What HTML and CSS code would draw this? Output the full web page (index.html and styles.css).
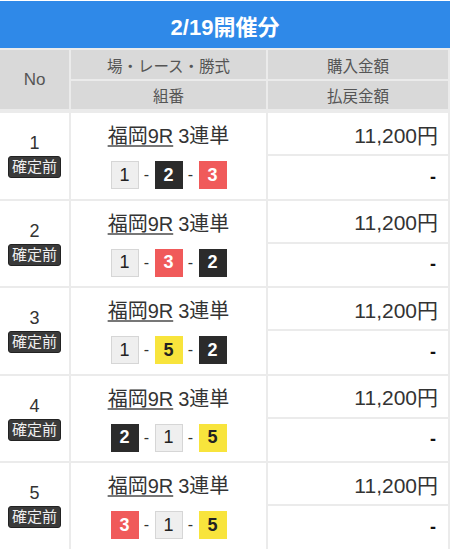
FILE: index.html
```html
<!DOCTYPE html>
<html lang="ja">
<head>
<meta charset="utf-8">
<link rel="stylesheet" href="styles.css">
</head>
<body>
<div class="wrap">
  <div class="title">2/19開催分</div>
  <div class="head">
    <div class="hcell no">No</div>
    <div class="hcell">場・レース・勝式</div>
    <div class="hcell">購入金額</div>
    <div class="hcell">組番</div>
    <div class="hcell">払戻金額</div>
  </div>

  <div class="row">
    <div class="cell num"><span class="n">1</span><span class="badge">確定前</span></div>
    <div class="cell mid">
      <div class="race"><span class="place">福岡9R</span> 3連単</div>
      <div class="combo"><span class="b b1">1</span><span class="dash">-</span><span class="b b2">2</span><span class="dash">-</span><span class="b b3">3</span></div>
    </div>
    <div class="cell amt">11,200円</div>
    <div class="cell pay">-</div>
  </div>

  <div class="row">
    <div class="cell num"><span class="n">2</span><span class="badge">確定前</span></div>
    <div class="cell mid">
      <div class="race"><span class="place">福岡9R</span> 3連単</div>
      <div class="combo"><span class="b b1">1</span><span class="dash">-</span><span class="b b3">3</span><span class="dash">-</span><span class="b b2">2</span></div>
    </div>
    <div class="cell amt">11,200円</div>
    <div class="cell pay">-</div>
  </div>

  <div class="row">
    <div class="cell num"><span class="n">3</span><span class="badge">確定前</span></div>
    <div class="cell mid">
      <div class="race"><span class="place">福岡9R</span> 3連単</div>
      <div class="combo"><span class="b b1">1</span><span class="dash">-</span><span class="b b5">5</span><span class="dash">-</span><span class="b b2">2</span></div>
    </div>
    <div class="cell amt">11,200円</div>
    <div class="cell pay">-</div>
  </div>

  <div class="row">
    <div class="cell num"><span class="n">4</span><span class="badge">確定前</span></div>
    <div class="cell mid">
      <div class="race"><span class="place">福岡9R</span> 3連単</div>
      <div class="combo"><span class="b b2">2</span><span class="dash">-</span><span class="b b1">1</span><span class="dash">-</span><span class="b b5">5</span></div>
    </div>
    <div class="cell amt">11,200円</div>
    <div class="cell pay">-</div>
  </div>

  <div class="row">
    <div class="cell num"><span class="n">5</span><span class="badge">確定前</span></div>
    <div class="cell mid">
      <div class="race"><span class="place">福岡9R</span> 3連単</div>
      <div class="combo"><span class="b b3">3</span><span class="dash">-</span><span class="b b1">1</span><span class="dash">-</span><span class="b b5">5</span></div>
    </div>
    <div class="cell amt">11,200円</div>
    <div class="cell pay">-</div>
  </div>
</div>
</body>
</html>
```

FILE: styles.css
```css
html, body {
  margin: 0;
  padding: 0;
  background: #ffffff;
}
body {
  font-family: "Liberation Sans", "Noto Sans CJK JP", sans-serif;
  color: #333333;
}
.wrap {
  width: 450px;
  margin-top: 1px;
  background: #ebebeb;
  display: flex;
  flex-direction: column;
  gap: 2px;
}
.title {
  height: 47px;
  background: #2f89e8;
  color: #ffffff;
  font-weight: bold;
  font-size: 22px;
  display: flex;
  align-items: center;
  justify-content: center;
}
.head {
  display: grid;
  grid-template-columns: 69px 195px 180px;
  grid-template-rows: 29px 28px;
  gap: 2px;
  margin-right: 2px;
  padding-bottom: 2px;
}
.hcell {
  background: #d9d9d9;
  color: #555555;
  font-size: 15.5px;
  display: flex;
  align-items: center;
  justify-content: center;
}
.hcell.no {
  grid-row: span 2;
  font-size: 17px;
}
.row {
  display: grid;
  grid-template-columns: 69px 195px 180px;
  grid-template-rows: 41px 42.5px;
  gap: 2px;
  margin-right: 2px;
}
.cell {
  background: #ffffff;
}
.num {
  grid-row: span 2;
  display: flex;
  flex-direction: column;
  align-items: center;
  justify-content: center;
  gap: 3px;
}
.n {
  font-size: 18px;
  line-height: 20px;
  color: #333333;
}
.badge {
  background: #3a3a3a;
  color: #f0f0f0;
  font-size: 15px;
  line-height: 20px;
  padding: 0 3px;
  border-radius: 3px;
  border: 1px solid #222222;
}
.mid {
  grid-row: span 2;
  display: grid;
  grid-template-rows: 41px 44.5px;
}
.race {
  font-size: 20px;
  display: flex;
  align-items: center;
  justify-content: center;
  gap: 5px;
  padding-top: 2px;
}
.place {
  text-decoration: underline;
  text-decoration-color: #777777;
  text-underline-offset: 2px;
}
.combo {
  display: flex;
  align-items: center;
  justify-content: center;
  gap: 5px;
  padding-bottom: 2px;
}
.dash {
  font-size: 16px;
  width: 6px;
  text-align: center;
}
.b {
  width: 28px;
  height: 28px;
  box-sizing: border-box;
  display: flex;
  align-items: center;
  justify-content: center;
  font-size: 18px;
  font-weight: bold;
}
.b1 {
  background: #efefef;
  border: 1px solid #d6d6d6;
  color: #222222;
  font-weight: normal;
}
.b2 {
  background: #2b2b2b;
  color: #ffffff;
}
.b3 {
  background: #f05a5a;
  color: #ffffff;
}
.b5 {
  background: #f8e43c;
  color: #222222;
}
.amt {
  font-size: 21px;
  display: flex;
  align-items: center;
  justify-content: flex-end;
  padding-right: 10px;
  color: #333333;
}
.pay {
  font-size: 18px;
  font-weight: bold;
  display: flex;
  align-items: center;
  justify-content: flex-end;
  padding-right: 12px;
  color: #111111;
}
```
